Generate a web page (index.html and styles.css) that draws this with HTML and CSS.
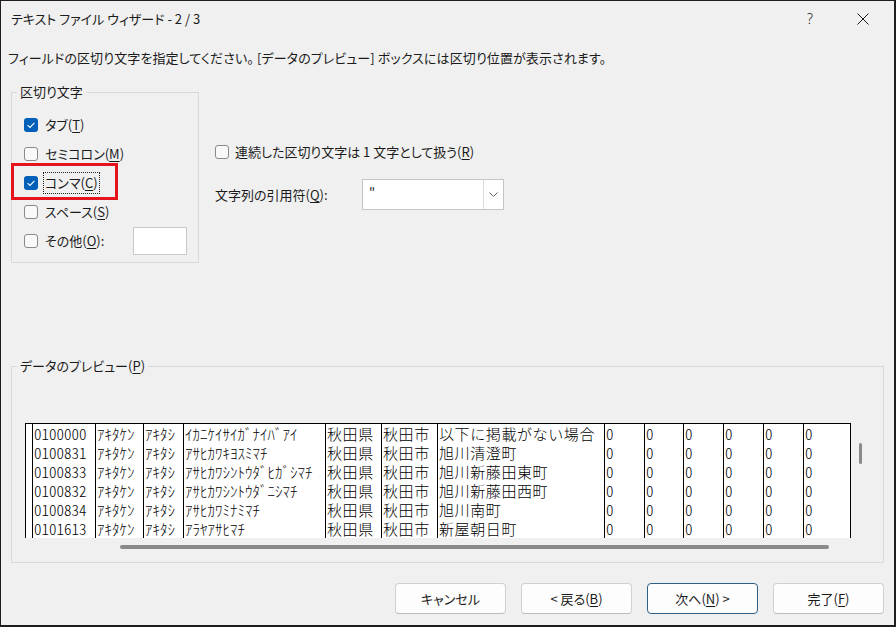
FILE: index.html
```html
<!DOCTYPE html>
<html lang="ja">
<head>
<meta charset="utf-8">
<title>テキスト ファイル ウィザード - 2 / 3</title>
<link rel="stylesheet" href="styles.css">
</head>
<body>
<div class="window">
  <div class="titlebar">
    <span class="title">テキスト ファイル ウィザード - 2 / 3</span>
    <span class="help">?</span>
    <span class="close"><svg width="12" height="12" viewBox="0 0 12 12"><path d="M0.5 0.5 L11.5 11.5 M11.5 0.5 L0.5 11.5" stroke="#1a1a1a" stroke-width="1" fill="none"/></svg></span>
  </div>
  <p class="instr">フィールドの区切り文字を指定してください。 [データのプレビュー] ボックスには区切り位置が表示されます。</p>

  <div class="options">
    <fieldset class="group delims">
      <legend>区切り文字</legend>
      <div class="rows">
        <div class="row">
          <span class="cb"><svg width="14" height="14" viewBox="0 0 14 14"><rect width="14" height="14" rx="3" fill="#005fb8"/><path d="M3.6 7.1 L6 9.4 L10.4 4.8" stroke="#fff" stroke-width="1.1" fill="none"/></svg></span>
          <span class="lbl">タブ(<u>T</u>)</span>
        </div>
        <div class="row">
          <span class="cb"><svg width="14" height="14" viewBox="0 0 14 14"><rect x="0.5" y="0.5" width="13" height="13" rx="2.5" fill="#f9f9f9" stroke="#8a8a8a"/></svg></span>
          <span class="lbl">セミコロン(<u>M</u>)</span>
        </div>
        <div class="row focus-row">
          <span class="cb"><svg width="14" height="14" viewBox="0 0 14 14"><rect width="14" height="14" rx="3" fill="#005fb8"/><path d="M3.6 7.1 L6 9.4 L10.4 4.8" stroke="#fff" stroke-width="1.1" fill="none"/></svg></span>
          <span class="lbl focus">コンマ(<u>C</u>)</span>
          <span class="annot"></span>
        </div>
        <div class="row">
          <span class="cb"><svg width="14" height="14" viewBox="0 0 14 14"><rect x="0.5" y="0.5" width="13" height="13" rx="2.5" fill="#f9f9f9" stroke="#8a8a8a"/></svg></span>
          <span class="lbl">スペース(<u>S</u>)</span>
        </div>
        <div class="row other">
          <span class="cb"><svg width="14" height="14" viewBox="0 0 14 14"><rect x="0.5" y="0.5" width="13" height="13" rx="2.5" fill="#f9f9f9" stroke="#8a8a8a"/></svg></span>
          <span class="lbl">その他(<u>O</u>):</span>
          <span class="textbox"></span>
        </div>
      </div>
    </fieldset>

    <div class="right">
      <div class="rrow">
        <span class="cb"><svg width="14" height="14" viewBox="0 0 14 14"><rect x="0.5" y="0.5" width="13" height="13" rx="2.5" fill="#f9f9f9" stroke="#8a8a8a"/></svg></span>
        <span class="lbl">連続した区切り文字は 1 文字として扱う(<u>R</u>)</span>
      </div>
      <div class="combo-row">
        <span class="combo-label">文字列の引用符(<u>Q</u>):</span>
        <div class="combo">
          <span class="combo-val">"</span>
          <span class="combo-btn"><svg width="9" height="5" viewBox="0 0 9 5"><path d="M0.5 0.5 L4.5 4.5 L8.5 0.5" fill="none" stroke="#606060" stroke-width="1"/></svg></span>
        </div>
      </div>
    </div>
  </div>

  <fieldset class="group preview">
    <legend>データのプレビュー(<u>P</u>)</legend>
    <div class="preview-body">
      <div class="preview-main">
        <div class="grid">
          <span class="c"></span><span class="c">0100000</span><span class="c">ｱｷﾀｹﾝ</span><span class="c">ｱｷﾀｼ</span><span class="c">ｲｶﾆｹｲｻｲｶﾞﾅｲﾊﾞｱｲ</span><span class="c">秋田県</span><span class="c">秋田市</span><span class="c">以下に掲載がない場合</span><span class="c">0</span><span class="c">0</span><span class="c">0</span><span class="c">0</span><span class="c">0</span><span class="c">0</span>
          <span class="c"></span><span class="c">0100831</span><span class="c">ｱｷﾀｹﾝ</span><span class="c">ｱｷﾀｼ</span><span class="c">ｱｻﾋｶﾜｷﾖｽﾐﾏﾁ</span><span class="c">秋田県</span><span class="c">秋田市</span><span class="c">旭川清澄町</span><span class="c">0</span><span class="c">0</span><span class="c">0</span><span class="c">0</span><span class="c">0</span><span class="c">0</span>
          <span class="c"></span><span class="c">0100833</span><span class="c">ｱｷﾀｹﾝ</span><span class="c">ｱｷﾀｼ</span><span class="c">ｱｻﾋｶﾜｼﾝﾄｳﾀﾞﾋｶﾞｼﾏﾁ</span><span class="c">秋田県</span><span class="c">秋田市</span><span class="c">旭川新藤田東町</span><span class="c">0</span><span class="c">0</span><span class="c">0</span><span class="c">0</span><span class="c">0</span><span class="c">0</span>
          <span class="c"></span><span class="c">0100832</span><span class="c">ｱｷﾀｹﾝ</span><span class="c">ｱｷﾀｼ</span><span class="c">ｱｻﾋｶﾜｼﾝﾄｳﾀﾞﾆｼﾏﾁ</span><span class="c">秋田県</span><span class="c">秋田市</span><span class="c">旭川新藤田西町</span><span class="c">0</span><span class="c">0</span><span class="c">0</span><span class="c">0</span><span class="c">0</span><span class="c">0</span>
          <span class="c"></span><span class="c">0100834</span><span class="c">ｱｷﾀｹﾝ</span><span class="c">ｱｷﾀｼ</span><span class="c">ｱｻﾋｶﾜﾐﾅﾐﾏﾁ</span><span class="c">秋田県</span><span class="c">秋田市</span><span class="c">旭川南町</span><span class="c">0</span><span class="c">0</span><span class="c">0</span><span class="c">0</span><span class="c">0</span><span class="c">0</span>
          <span class="c"></span><span class="c">0101613</span><span class="c">ｱｷﾀｹﾝ</span><span class="c">ｱｷﾀｼ</span><span class="c">ｱﾗﾔｱｻﾋﾏﾁ</span><span class="c">秋田県</span><span class="c">秋田市</span><span class="c">新屋朝日町</span><span class="c">0</span><span class="c">0</span><span class="c">0</span><span class="c">0</span><span class="c">0</span><span class="c">0</span>
        </div>
        <div class="hscroll"><div class="hthumb"></div></div>
      </div>
      <div class="vscroll"><div class="vthumb"></div></div>
    </div>
  </fieldset>

  <div class="buttons">
    <button class="btn">キャンセル</button>
    <button class="btn">&lt; 戻る(<u>B</u>)</button>
    <button class="btn default">次へ(<u>N</u>) &gt;</button>
    <button class="btn">完了(<u>F</u>)</button>
  </div>
</div>
</body>
</html>
```

FILE: styles.css
```css
* { box-sizing: border-box; }
html, body { margin: 0; padding: 0; }
body {
  width: 896px;
  height: 627px;
  overflow: hidden;
  font-family: "Noto Sans CJK JP", "Noto Sans", sans-serif;
  font-size: 13px;
  color: #1b1b1b;
  font-feature-settings: "palt";
}
u { text-decoration: underline; text-underline-offset: 2px; }

.window {
  width: 896px;
  height: 627px;
  background: #f0f0f0;
  border-style: solid;
  border-color: #1e1e1e;
  border-width: 1px 2px 2px 1px;
  display: flex;
  flex-direction: column;
}

.titlebar {
  flex: none;
  height: 35px;
  display: flex;
  align-items: center;
  padding-left: 10px;
}
.title { flex: 1; font-size: 13px; white-space: nowrap; }
.help {
  width: 14px;
  margin-right: 40px;
  text-align: center;
  font-family: "Noto Sans", sans-serif;
  font-size: 14px;
  font-weight: 300;
}
.close { width: 12px; height: 12px; margin-right: 25px; display: flex; }
.close svg { display: block; }

.instr {
  flex: none;
  margin: 12px 0 0;
  padding-left: 7px;
  height: 20px;
  line-height: 20px;
  letter-spacing: 0.1px;
  white-space: nowrap;
}

.options {
  flex: none;
  display: flex;
  align-items: flex-start;
  margin: 16px 0 0 10px;
}

fieldset.group {
  margin: 0;
  padding: 0;
  border: 1px solid #d9d9d9;
  min-width: 0;
}
fieldset.group legend {
  margin-left: 5px;
  padding: 0 3px;
  line-height: 16px;
}

fieldset.delims { width: 188px; }
.rows { padding: 10px 0 7px 0; }
.row {
  display: flex;
  align-items: center;
  height: 29px;
  padding-left: 12px;
}
.row.other { padding-right: 11px; }
.cb { width: 14px; height: 14px; flex: none; display: block; }
.cb svg { display: block; }
.lbl { margin-left: 7px; line-height: 20px; white-space: nowrap; }
.lbl.focus {
  margin-left: 5px;
  padding: 0 1px;
  border: 1px dotted #222;
}
.focus-row { position: relative; }
.annot {
  position: absolute;
  left: -1px;
  top: -5px;
  width: 107px;
  height: 37px;
  border: 3px solid #e5141c;
}
.textbox {
  margin-left: auto;
  width: 54px;
  height: 28px;
  background: #fff;
  border: 1px solid #c8c8c8;
}

.right {
  margin-left: 16px;
  padding-top: 58px;
  display: flex;
  flex-direction: column;
}
.rrow { display: flex; align-items: center; height: 20px; }
.rrow .lbl { margin-left: 6px; }
.combo-row {
  margin-top: 17px;
  display: flex;
  align-items: center;
  height: 31px;
}
.combo-label { width: 147px; white-space: nowrap; }
.combo {
  width: 142px;
  height: 31px;
  background: #fff;
  border: 1px solid #c5c5c5;
  display: flex;
}
.combo-val { flex: 1; padding-left: 6px; line-height: 27px; }
.combo-btn {
  width: 20px;
  border-left: 1px solid #dcdcdc;
  display: flex;
  align-items: center;
  justify-content: center;
}
.combo-btn svg { display: block; }

fieldset.preview {
  flex: none;
  margin: 95px 0 0 10px;
  width: 873px;
}
.preview-body {
  display: flex;
  padding: 49px 0 13px 13px;
}
.grid {
  display: grid;
  grid-template-columns: 7px 63px 48px 40px 142px 56px 56px 167px 40px 39px 40px 40px 40px 48px;
  grid-auto-rows: 19px;
  width: 826px;
  height: 115px;
  overflow: hidden;
  border-top: 1px solid #000;
  background: #fff;
  font-size: 15px;
  font-weight: 300;
  font-feature-settings: "hwid";
  color: #000;
}
.c {
  border-left: 1px solid #000;
  padding-left: 1px;
  line-height: 19px;
  white-space: nowrap;
  overflow: hidden;
}
.c:nth-child(14n+6),
.c:nth-child(14n+7),
.c:nth-child(14n+8) { letter-spacing: 0.6px; }
.c:nth-child(14n) { border-right: 1px solid #000; }
.hscroll { margin-top: 7px; height: 4px; padding-left: 95px; }
.hthumb { width: 709px; height: 4px; background: #8a8a8a; border-radius: 2px; }
.vscroll { margin-left: 8px; padding-top: 20px; }
.vthumb { width: 3px; height: 21px; background: #8a8a8a; border-radius: 2px; }

.buttons {
  flex: none;
  display: flex;
  justify-content: flex-end;
  gap: 15px;
  margin-top: 20px;
  padding-right: 10px;
}
.btn {
  width: 111px;
  height: 31px;
  background: #fdfdfd;
  border: 1px solid #d0d0d0;
  border-bottom-color: #bdbdbd;
  border-radius: 4px;
  font-family: inherit;
  font-size: 13px;
  font-feature-settings: "palt";
  color: #1b1b1b;
  padding: 0;
}
.btn.default { border-color: #2e5f86; }
```
